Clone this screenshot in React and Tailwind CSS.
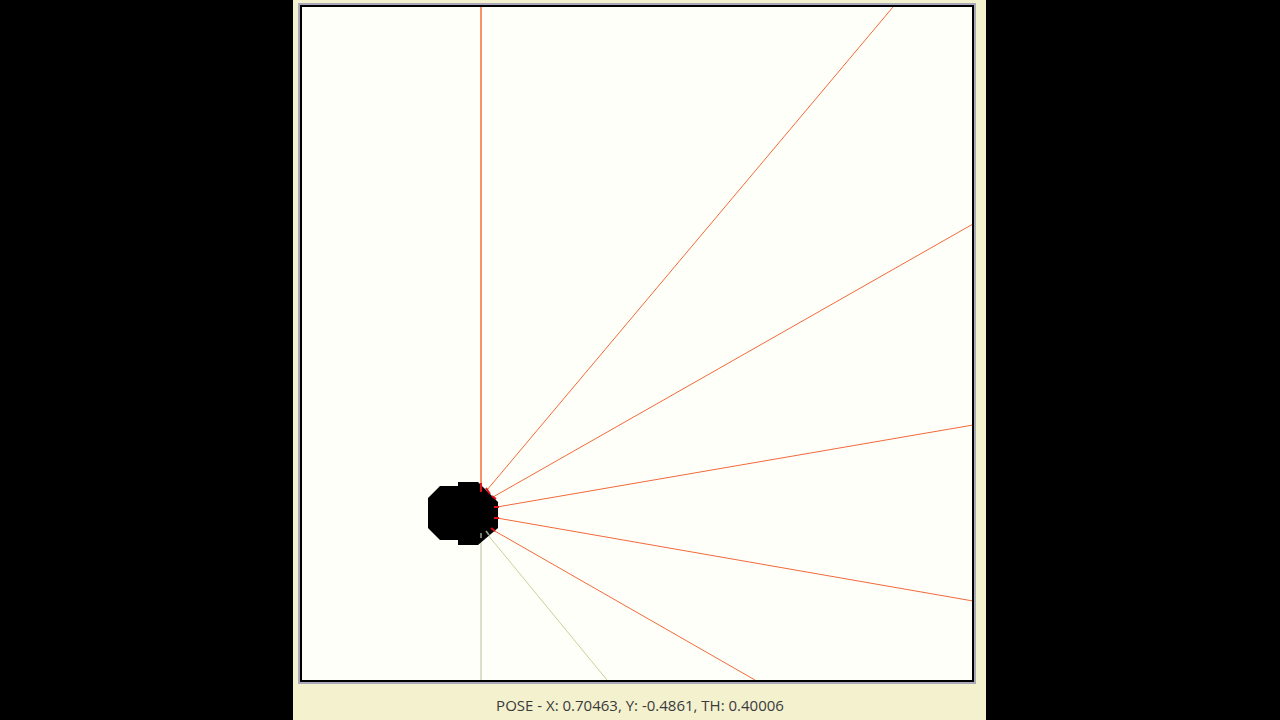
const rays = [
  { x1: 481, y1: 484, x2: 481, y2: 0, c: '#f7926a', w: 2 },
  { x1: 487, y1: 490, x2: 893, y2: 7, c: '#f2693a' },
  { x1: 493, y1: 497, x2: 973, y2: 224, c: '#f2693a' },
  { x1: 497, y1: 507, x2: 973, y2: 425, c: '#f2693a' },
  { x1: 497, y1: 518, x2: 973, y2: 601, c: '#f2693a' },
  { x1: 493, y1: 530, x2: 755, y2: 680, c: '#f2693a' },
  { x1: 488, y1: 535, x2: 607, y2: 680, c: '#c9cf9a' },
  { x1: 481, y1: 537, x2: 481, y2: 680, c: '#dadfca', w: 2 },
]

function Robot() {
  return (
    <g>
      <polygon
        points="440,486 458,486 458,482 478,482 498,502 498,528 478,545 458,545 458,540 440,540 428,528 428,498"
        fill="#000"
      />
      <line x1="481" y1="483" x2="481" y2="492" stroke="#e0101a" strokeWidth="2" />
      <line x1="486" y1="488" x2="490" y2="494" stroke="#e0101a" strokeWidth="2" />
      <line x1="492" y1="496" x2="496" y2="499" stroke="#e0101a" strokeWidth="2" />
      <line x1="494" y1="507" x2="499" y2="507" stroke="#e0101a" strokeWidth="2" />
      <line x1="494" y1="518" x2="499" y2="518" stroke="#e0101a" strokeWidth="2" />
      <line x1="491" y1="528" x2="495" y2="531" stroke="#e0101a" strokeWidth="2" />
      <line x1="486" y1="531" x2="489" y2="535" stroke="#9aa58a" strokeWidth="1.5" />
      <line x1="481" y1="533" x2="481" y2="538" stroke="#9aa58a" strokeWidth="1.5" />
    </g>
  )
}

export default function App() {
  return (
    <div className="min-h-screen bg-black">
      <div className="ml-[293px] w-[693px] h-[720px] bg-[#f4f1cf] flex flex-col pt-[5px] pl-[7px] pr-[12px]">
        <div className="relative h-[677px] border-2 border-black outline-2 outline-[#a9a9b9] bg-[#fffffa] overflow-hidden">
          <svg
            className="absolute inset-0 w-full h-full"
            viewBox="302 7 670 673"
            preserveAspectRatio="none"
          >
            {rays.map((r, i) => (
              <line
                key={i}
                x1={r.x1}
                y1={r.y1}
                x2={r.x2}
                y2={r.y2}
                stroke={r.c}
                strokeWidth={r.w || 1}
              />
            ))}
            <Robot />
          </svg>
        </div>
        <div className="flex-1 flex items-center justify-center pt-[8px] pl-[6px]">
          <span className="font-['Open_Sans','Liberation_Sans',sans-serif] text-[15px] text-[#3a3a3a]">
            POSE - X: 0.70463, Y: -0.4861, TH: 0.40006
          </span>
        </div>
      </div>
    </div>
  )
}
